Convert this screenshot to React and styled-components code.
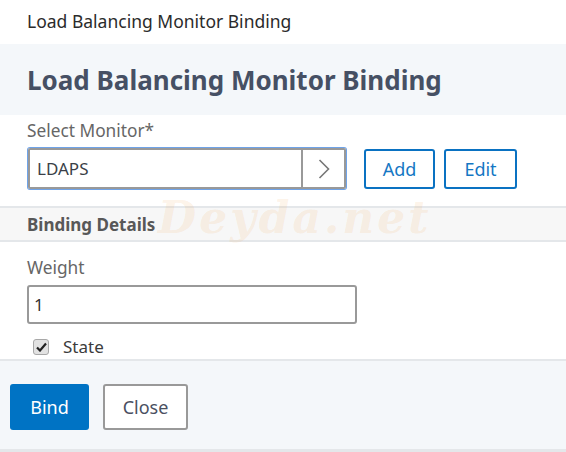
import styled, { createGlobalStyle } from "styled-components"

const Global = createGlobalStyle`
  html, body {
    margin: 0;
    padding: 0;
    background: #ffffff;
    font-family: "Noto Sans", "Open Sans", sans-serif;
  }
`

const Page = styled.div`
  position: relative;
  width: 566px;
  height: 452px;
  overflow: hidden;
  display: flex;
  flex-direction: column;
`
const TopBar = styled.div`
  height: 44px;
  padding-left: 27px;
  display: flex;
  align-items: center;
  font-size: 17.5px;
  color: #2b2b2b;
  padding-bottom: 3px;
  box-sizing: border-box;
`
const Header = styled.div`
  height: 71px;
  background: #f4f7fa;
  padding-left: 27px;
  display: flex;
  align-items: center;
`
const Title = styled.h1`
  margin: 0;
  font-size: 26px;
  font-weight: 700;
  color: #465064;
`
const Section = styled.div`
  padding: ${p => p.$pad || "5px 0 0 27px"};
  height: ${p => p.$h}px;
  box-sizing: border-box;
`
const Label = styled.div`
  font-size: 17.3px;
  color: #666;
  line-height: 22px;
  margin-bottom: ${p => p.$mb || 6}px;
`
const Row = styled.div`
  display: flex;
  align-items: center;
`
const Select = styled.div`
  width: 318px;
  height: 41px;
  box-sizing: border-box;
  border: 2px solid #999;
  box-shadow: 0 0 0 1px #6fa3e8;
  border-radius: 2px;
  display: flex;
  margin: 0 18px 0 1px;
`
const SelectValue = styled.div`
  flex: 1;
  display: flex;
  align-items: center;
  padding-left: 7px;
  font-size: 17px;
  color: #3a3f48;
  border-right: 2px solid #999;
`
const SelectArrow = styled.div`
  width: 41px;
  display: flex;
  align-items: center;
  justify-content: center;
`
const OutlineButton = styled.button`
  height: 40px;
  width: ${p => p.$w}px;
  box-sizing: border-box;
  border: 2px solid #0a72c2;
  border-radius: 3px;
  background: #fff;
  color: #1577c4;
  font-family: inherit;
  font-size: 18px;
  margin-right: 9px;
  padding: 0;
`
const BandTitle = styled.div`
  height: 36px;
  background: #f7f7f7;
  border-top: 2px solid #e4e7ea;
  border-bottom: 2px solid #e4e7ea;
  box-sizing: border-box;
  padding-left: 27px;
  display: flex;
  align-items: center;
  font-size: 17px;
  font-weight: 700;
  color: #585858;
`
const TextInput = styled.div`
  width: 330px;
  height: 39px;
  box-sizing: border-box;
  border: 2px solid #999;
  border-radius: 3px;
  display: flex;
  align-items: center;
  padding-left: 5px;
  font-size: 17px;
  color: #333;
`
const CheckRow = styled.div`
  display: flex;
  align-items: center;
  margin: 11px 0 0 6px;
  font-size: 17px;
  color: #3c3c3c;
`
const Box = styled.span`
  width: 14px;
  height: 14px;
  border: 1px solid #a8a8a8;
  border-radius: 3px;
  background: #e2e2e2;
  display: flex;
  align-items: center;
  justify-content: center;
  margin-right: 14px;
`
const Footer = styled.div`
  flex: 1;
  background: #f4f7fa;
  border-top: 2px solid #e4e7ea;
  border-bottom: 3px solid #e4e7ea;
  display: flex;
  align-items: flex-start;
  padding: 23px 0 0 10px;
  gap: 14px;
`
const Primary = styled.button`
  width: 79px;
  height: 46px;
  border: none;
  border-radius: 3px;
  background: #0073c4;
  color: #fff;
  font-family: inherit;
  font-size: 18px;
`
const Secondary = styled.button`
  width: 85px;
  height: 46px;
  box-sizing: border-box;
  border: 2px solid #999;
  border-radius: 3px;
  background: #fff;
  color: #4a5061;
  font-family: inherit;
  font-size: 18px;
`
const Watermark = styled.div`
  position: absolute;
  left: 158px;
  top: 192px;
  font-family: "DejaVu Serif", "Liberation Serif", serif;
  font-style: italic;
  font-weight: 700;
  font-size: 44px;
  letter-spacing: 3px;
  color: rgba(240, 170, 90, 0.15);
  pointer-events: none;
`

export default function App() {
  return (
    <Page>
      <Global />
      <TopBar>Load Balancing Monitor Binding</TopBar>
      <Header>
        <Title>Load Balancing Monitor Binding</Title>
      </Header>
      <Section $h={91}>
        <Label>Select Monitor*</Label>
        <Row>
          <Select>
            <SelectValue>LDAPS</SelectValue>
            <SelectArrow>
              <svg width="12" height="22" viewBox="0 0 12 22">
                <path d="M1.5 2 L10.5 11 L1.5 20" fill="none" stroke="#777" strokeWidth="1.6" />
              </svg>
            </SelectArrow>
          </Select>
          <OutlineButton $w={71}>Add</OutlineButton>
          <OutlineButton $w={73}>Edit</OutlineButton>
        </Row>
      </Section>
      <BandTitle>Binding Details</BandTitle>
      <Section $h={117} $pad="15px 0 0 27px">
        <Label $mb={6}>Weight</Label>
        <TextInput>1</TextInput>
        <CheckRow>
          <Box>
            <svg width="11" height="10" viewBox="0 0 11 10">
              <path d="M1 5.5 L4 8.5 L10 1.5" fill="none" stroke="#222" strokeWidth="2.2" />
            </svg>
          </Box>
          State
        </CheckRow>
      </Section>
      <Footer>
        <Primary>Bind</Primary>
        <Secondary>Close</Secondary>
      </Footer>
      <Watermark>Deyda.net</Watermark>
    </Page>
  )
}
